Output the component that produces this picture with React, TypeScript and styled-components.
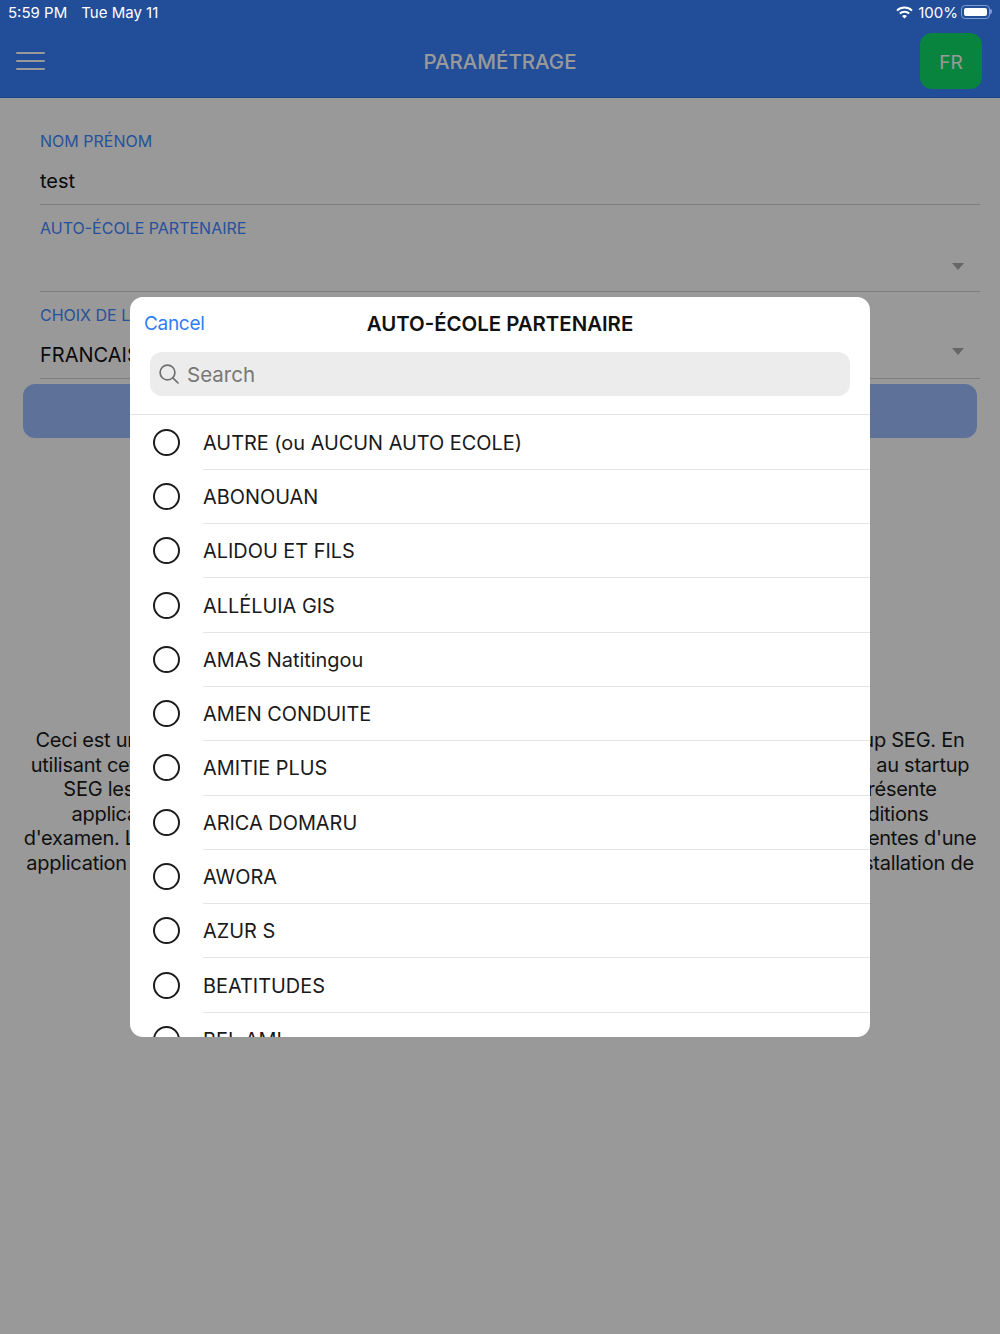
import React from "react";
import styled, { createGlobalStyle } from "styled-components";

const schools = [
    "AUTRE (ou AUCUN AUTO ECOLE)",
    "ABONOUAN",
    "ALIDOU ET FILS",
    "ALLÉLUIA GIS",
    "AMAS Natitingou",
    "AMEN CONDUITE",
    "AMITIE PLUS",
    "ARICA DOMARU",
    "AWORA",
    "AZUR S",
    "BEATITUDES",
    "BEL AMI",
];

const notice = [
    "Ceci est une application certifiée de préparation à l'examen du code de la route de la startup SEG. En",
    "utilisant cette application, vous acceptez d'acquitter tous les frais d'abonnement et d'accès au startup",
    "SEG les montants indiqués pour chaque formule de révision et d'examen ainsi dans la présente",
    "application afin de bénéficier de toutes les leçons, des exercices et des meilleures conditions",
    "d'examen. Les données de progression restent locales et peuvent donc être tout à fait différentes d'une",
    "application réinstallée à une autre et seront alors toutes éliminées après chaque nouvelle installation de",
];

const App = () => {
    return (
        <Page>
            <GlobalStyle />
            <Header>
                <MenuButton>
                    <span />
                    <span />
                    <span />
                </MenuButton>
                <HeaderTitle>PARAMÉTRAGE</HeaderTitle>
                <LangButton>FR</LangButton>
            </Header>

            <Form>
                <Field>
                    <FieldLabel>NOM PRÉNOM</FieldLabel>
                    <FieldValue>test</FieldValue>
                </Field>
                <Field>
                    <FieldLabel>AUTO-ÉCOLE PARTENAIRE</FieldLabel>
                    <FieldValue />
                    <Caret $top={58} />
                </Field>
                <Field>
                    <FieldLabel>CHOIX DE LA LANGUE</FieldLabel>
                    <FieldValue>FRANCAIS</FieldValue>
                    <Caret $top={56} />
                </Field>
            </Form>
            <SaveButton />

            <Notice>
                {notice.map(line => (
                    <div key={line}>{line}</div>
                ))}
            </Notice>

            <Scrim>
                <Modal>
                    <ModalHead>
                        <CancelLink>Cancel</CancelLink>
                        <ModalTitle>AUTO-ÉCOLE PARTENAIRE</ModalTitle>
                    </ModalHead>
                    <SearchBox>
                        <svg width="24" height="24" viewBox="0 0 24 24" fill="none" stroke="#6f6f6f" strokeWidth="1.7" strokeLinecap="round">
                            <circle cx="10.5" cy="10.5" r="7.4" />
                            <line x1="15.9" y1="15.9" x2="21" y2="21" />
                        </svg>
                        <SearchText>Search</SearchText>
                    </SearchBox>
                    <List>
                        {schools.map(name => (
                            <Row key={name}>
                                <Radio />
                                <RowText>{name}</RowText>
                            </Row>
                        ))}
                    </List>
                </Modal>
            </Scrim>

            <StatusBar>
                <StatusTime>
                    <span>5:59 PM</span>
                    <span>Tue May 11</span>
                </StatusTime>
                <StatusRight>
                    <WifiIcon width="17" height="13" viewBox="0 0 17 13" fill="none" stroke="#fff" strokeWidth="2">
                        <path d="M1 4.6C5.2 .6 11.8 .6 16 4.6" />
                        <path d="M3.8 7.5C6.4 5 10.6 5 13.2 7.5" />
                        <path d="M8.5 12.6L6 10c1.4-1.2 3.6-1.2 5 0z" fill="#fff" stroke="none" />
                    </WifiIcon>
                    <span>100%</span>
                    <Battery />
                </StatusRight>
            </StatusBar>
        </Page>
    );
};

export default App;

const GlobalStyle = createGlobalStyle`
    html, body {
        margin: 0;
        padding: 0;
        background: #fff;
    }
    body {
        font-family: Inter, "Liberation Sans", sans-serif;
    }
`;

const Page = styled.div`
    position: relative;
    width: 1000px;
    height: 1334px;
    overflow: hidden;
    background: #fff;
`;

const StatusBar = styled.div`
    position: absolute;
    top: 0;
    left: 0;
    right: 0;
    height: 24px;
    padding: 0 8px;
    display: flex;
    align-items: center;
    justify-content: space-between;
    color: #fff;
    font-size: 15px;
`;

const StatusTime = styled.div`
    display: flex;
    gap: 14px;
`;

const StatusRight = styled.div`
    display: flex;
    align-items: center;
    gap: 3px;
    margin-right: -1px;
`;

const WifiIcon = styled.svg`
    margin-right: 2px;
`;

const Battery = styled.div`
    position: relative;
    box-sizing: border-box;
    width: 29px;
    height: 14px;
    margin-right: 3px;
    padding: 2px;
    border: 1px solid #7f9ccf;
    border-radius: 4px;
    &::before {
        content: "";
        display: block;
        height: 100%;
        background: #fff;
        border-radius: 2px;
    }
    &::after {
        content: "";
        position: absolute;
        top: 3px;
        right: -3px;
        width: 2px;
        height: 5px;
        background: #7f9ccf;
        border-radius: 0 2px 2px 0;
    }
`;

const Header = styled.header`
    position: relative;
    box-sizing: border-box;
    height: 98px;
    padding: 33px 18px 8px 16px;
    display: flex;
    align-items: center;
    justify-content: space-between;
    background: #3780ff;
    border-bottom: 1px solid #3075e6;
`;

const MenuButton = styled.div`
    display: flex;
    flex-direction: column;
    gap: 6px;
    width: 29px;
    margin-top: -1px;
    span {
        display: block;
        height: 2px;
        background: #fff;
        border-radius: 1px;
    }
`;

const HeaderTitle = styled.div`
    position: absolute;
    left: 0;
    right: 0;
    top: 49px;
    text-align: center;
    color: #fff;
    font-size: 20.5px;
    line-height: 26px;
    font-weight: 500;
`;

const LangButton = styled.div`
    width: 62px;
    height: 56px;
    padding-top: 2px;
    box-sizing: border-box;
    display: flex;
    align-items: center;
    justify-content: center;
    border-radius: 12px;
    background: #10dd6a;
    color: #fff;
    font-size: 19px;
    font-weight: 400;
`;

const Form = styled.div`
    padding: 20px 20px 0 40px;
`;

const Field = styled.div`
    position: relative;
    box-sizing: border-box;
    height: 87px;
    padding-top: 10px;
    border-bottom: 1px solid #d0d0d0;
`;

const FieldLabel = styled.div`
    color: #4388ff;
    font-size: 16px;
    line-height: 26px;
`;

const FieldValue = styled.div`
    margin-top: 14px;
    height: 26px;
    color: #111;
    font-size: 20px;
    line-height: 26px;
`;

const Caret = styled.span<{ $top: number }>`
    position: absolute;
    right: 16px;
    top: ${p => p.$top}px;
    width: 0;
    height: 0;
    border-left: 6px solid transparent;
    border-right: 6px solid transparent;
    border-top: 7px solid #aaa;
`;

const SaveButton = styled.div`
    height: 54px;
    margin: 5px 23px 0;
    border-radius: 12px;
    background: #9dbeff;
`;

const Notice = styled.div`
    margin-top: 290px;
    color: #1a1a1a;
    font-size: 20px;
    letter-spacing: -0.25px;
    line-height: 24.6px;
    text-align: center;
    white-space: nowrap;
`;

const Scrim = styled.div`
    position: absolute;
    inset: 0;
    display: flex;
    align-items: center;
    justify-content: center;
    background: rgba(0, 0, 0, 0.4);
`;

const Modal = styled.div`
    width: 740px;
    height: 740px;
    overflow: hidden;
    background: #fff;
    border-radius: 13px;
`;

const ModalHead = styled.div`
    position: relative;
    height: 55px;
    display: flex;
    align-items: center;
    justify-content: center;
`;

const CancelLink = styled.span`
    position: absolute;
    left: 14px;
    top: 14px;
    color: #2f80f6;
    font-size: 19px;
    letter-spacing: -0.3px;
    line-height: 26px;
`;

const ModalTitle = styled.div`
    margin-top: -3px;
    color: #111;
    font-size: 20.4px;
    font-weight: 600;
`;

const SearchBox = styled.div`
    box-sizing: border-box;
    height: 44px;
    margin: 0 20px 18px;
    padding: 0 7px;
    display: flex;
    align-items: center;
    gap: 6px;
    background: #ececec;
    border-radius: 12px;
`;

const SearchText = styled.span`
    color: #777;
    font-size: 20.5px;
`;

const List = styled.div`
    padding-top: 0.5px;
    border-top: 1px solid #e4e4e4;
`;

const Row = styled.div`
    position: relative;
    box-sizing: border-box;
    height: 54.3px;
    padding-left: 23px;
    display: flex;
    align-items: center;
    &::after {
        content: "";
        position: absolute;
        left: 73px;
        right: 0;
        bottom: 0;
        height: 1px;
        background: #e4e4e4;
    }
`;

const Radio = styled.span`
    box-sizing: border-box;
    width: 27px;
    height: 27px;
    margin: -1px 23px 0 0;
    border: 2px solid #1c1c1c;
    border-radius: 50%;
    flex-shrink: 0;
`;

const RowText = styled.span`
    color: #1a1a1a;
    font-size: 19.9px;
`;
